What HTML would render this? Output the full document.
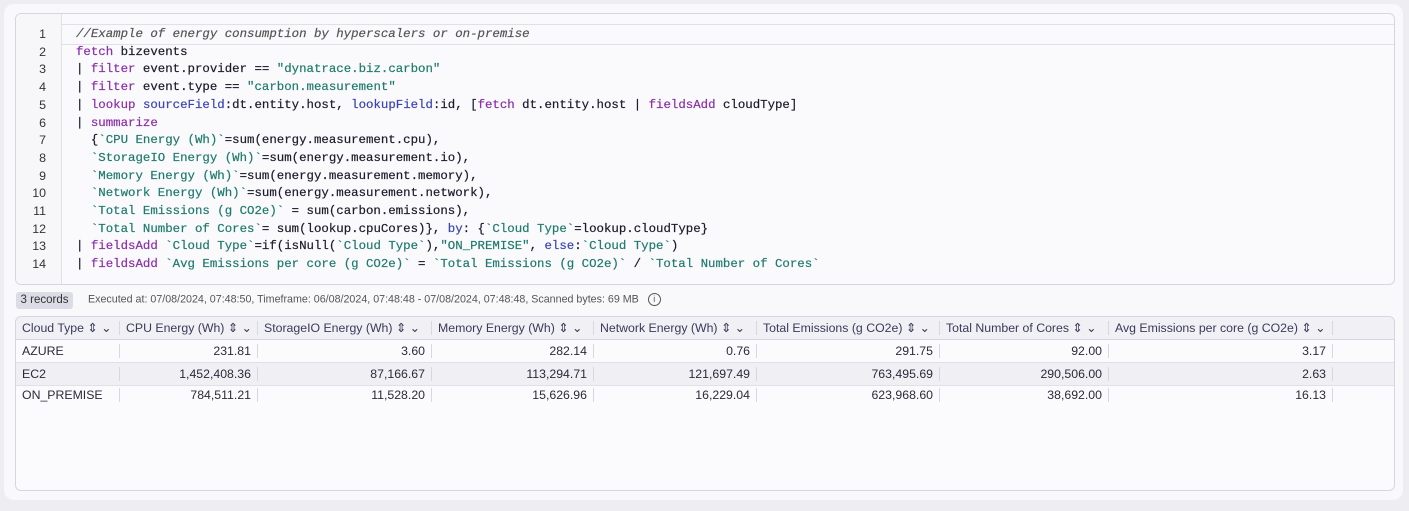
<!DOCTYPE html><html><head><style>
body{margin:0;width:1409px;height:511px;background:#eeeef2;font-family:"Liberation Sans",sans-serif;position:relative;overflow:hidden}
.card{position:absolute;left:4px;top:4px;width:1399px;height:496px;background:#f9f9fb;border-radius:10px}
.ed{position:absolute;left:15px;top:13px;width:1378px;height:270px;border:1px solid #d6d6e0;border-radius:6px;background:#fafafc;overflow:hidden}
.gut{position:absolute;left:0;top:0;width:45px;height:100%;border-right:1px solid #e0e0e8;background:#f7f7fa}
.ln{position:absolute;left:0;width:30px;text-align:right;font:12.4px "Liberation Sans",sans-serif;color:#333}
.cl{position:absolute;left:60px;font:12.4px "Liberation Mono",monospace;color:#1a1a2a;white-space:pre;-webkit-text-stroke:0.2px}
.k{color:#8a2fa8}.s{color:#1f7a6e}.c{color:#555;font-style:italic}.f{color:#3b45b0}
.hl{position:absolute;left:46px;right:0;top:10px;height:19px;border-top:1px solid #e0e0e8;border-bottom:1px solid #e0e0e8}
.badge{position:absolute;left:16px;top:292px;width:57px;height:17px;background:#dcdce6;border-radius:3px;font-size:11.5px;line-height:17px;text-align:center;color:#333}
.meta{position:absolute;left:88px;top:293px;font-size:10.7px;color:#555}
.tb{position:absolute;left:15px;top:316px;width:1378px;height:173px;border:1px solid #d6d6e0;border-radius:6px;background:#fbfbfd;overflow:hidden}
.row{position:absolute;left:0;width:100%;height:22px;font-size:12.3px;line-height:22px;color:#2a2a3a}
.hd{background:#f0f0f5;border-bottom:1px solid #d6d6e0;color:#3a3a5a}
.cell{position:absolute;top:0;height:22px;white-space:nowrap}
.cell.sep{border-right:1px solid #d8d8e2;height:14px;top:4px;line-height:14px}
</style></head><body>
<div class="card"></div>
<div class="ed">
<div class="gut"></div><div class="hl"></div>
<div class="ln" style="top:13px">1</div><div class="ln" style="top:30.7px">2</div><div class="ln" style="top:48.4px">3</div><div class="ln" style="top:66.1px">4</div><div class="ln" style="top:83.8px">5</div><div class="ln" style="top:101.5px">6</div><div class="ln" style="top:119.2px">7</div><div class="ln" style="top:136.9px">8</div><div class="ln" style="top:154.6px">9</div><div class="ln" style="top:172.3px">10</div><div class="ln" style="top:190px">11</div><div class="ln" style="top:207.7px">12</div><div class="ln" style="top:225.4px">13</div><div class="ln" style="top:243.1px">14</div>
<div class="cl c" style="top:13px">//Example of energy consumption by hyperscalers or on-premise</div>
<div class="cl" style="top:30.7px"><span class="k">fetch</span> bizevents</div>
<div class="cl" style="top:48.4px">| <span class="k">filter</span> event.provider == <span class="s">"dynatrace.biz.carbon"</span></div>
<div class="cl" style="top:66.1px">| <span class="k">filter</span> event.type == <span class="s">"carbon.measurement"</span></div>
<div class="cl" style="top:83.8px">| <span class="k">lookup</span> <span class="f">sourceField</span>:dt.entity.host, <span class="f">lookupField</span>:id, [<span class="k">fetch</span> dt.entity.host | <span class="k">fieldsAdd</span> cloudType]</div>
<div class="cl" style="top:101.5px">| <span class="k">summarize</span></div>
<div class="cl" style="top:119.2px">  {<span class="s">`CPU Energy (Wh)`</span>=sum(energy.measurement.cpu),</div>
<div class="cl" style="top:136.9px">  <span class="s">`StorageIO Energy (Wh)`</span>=sum(energy.measurement.io),</div>
<div class="cl" style="top:154.6px">  <span class="s">`Memory Energy (Wh)`</span>=sum(energy.measurement.memory),</div>
<div class="cl" style="top:172.3px">  <span class="s">`Network Energy (Wh)`</span>=sum(energy.measurement.network),</div>
<div class="cl" style="top:190px">  <span class="s">`Total Emissions (g CO2e)`</span> = sum(carbon.emissions),</div>
<div class="cl" style="top:207.7px">  <span class="s">`Total Number of Cores`</span>= sum(lookup.cpuCores)}, <span class="f">by</span>: {<span class="s">`Cloud Type`</span>=lookup.cloudType}</div>
<div class="cl" style="top:225.4px">| <span class="k">fieldsAdd</span> <span class="s">`Cloud Type`</span>=if(isNull(<span class="s">`Cloud Type`</span>),<span class="s">"ON_PREMISE"</span>, <span class="f">else</span>:<span class="s">`Cloud Type`</span>)</div>
<div class="cl" style="top:243.1px">| <span class="k">fieldsAdd</span> <span class="s">`Avg Emissions per core (g CO2e)`</span> = <span class="s">`Total Emissions (g CO2e)`</span> / <span class="s">`Total Number of Cores`</span></div>
</div>
<div class="badge">3 records</div>
<div class="meta">Executed at: 07/08/2024, 07:48:50, Timeframe: 06/08/2024, 07:48:48 - 07/08/2024, 07:48:48, Scanned bytes: 69 MB &nbsp;&nbsp;<span style="display:inline-block;width:11px;height:11px;border:1px solid #555;border-radius:50%;font-size:9px;line-height:11px;text-align:center;vertical-align:middle">i</span></div>
<div class="tb">
<div class="row hd" style="top:0">
<div class="cell sep" style="left:0;width:104px;padding-left:6px;box-sizing:border-box">Cloud Type ⇕ ⌄</div>
<div class="cell sep" style="left:104px;width:138px;padding-left:6px;box-sizing:border-box">CPU Energy (Wh) ⇕ ⌄</div>
<div class="cell sep" style="left:242px;width:174px;padding-left:6px;box-sizing:border-box">StorageIO Energy (Wh) ⇕ ⌄</div>
<div class="cell sep" style="left:416px;width:162px;padding-left:6px;box-sizing:border-box">Memory Energy (Wh) ⇕ ⌄</div>
<div class="cell sep" style="left:578px;width:163px;padding-left:6px;box-sizing:border-box">Network Energy (Wh) ⇕ ⌄</div>
<div class="cell sep" style="left:741px;width:183px;padding-left:6px;box-sizing:border-box">Total Emissions (g CO2e) ⇕ ⌄</div>
<div class="cell sep" style="left:924px;width:169px;padding-left:6px;box-sizing:border-box">Total Number of Cores ⇕ ⌄</div>
<div class="cell sep" style="left:1093px;width:224px;padding-left:6px;box-sizing:border-box">Avg Emissions per core (g CO2e) ⇕ ⌄</div>
</div>
<div id="r"></div>
</div>
<script>
const L=[0,104,242,416,578,741,924,1093,1317];
const D=[["AZURE","231.81","3.60","282.14","0.76","291.75","92.00","3.17"],["EC2","1,452,408.36","87,166.67","113,294.71","121,697.49","763,495.69","290,506.00","2.63"],["ON_PREMISE","784,511.21","11,528.20","15,626.96","16,229.04","623,968.60","38,692.00","16.13"]];
let h="";D.forEach((r,i)=>{h+=`<div class="row" style="top:${23+i*22}px;${i==1?'background:#efeff4;border-top:1px solid #e0e0e8;border-bottom:1px solid #e0e0e8;':''}">`;r.forEach((v,j)=>{h+=`<div class="cell sep" style="left:${L[j]}px;width:${L[j+1]-L[j]}px;box-sizing:border-box;${j?'text-align:right;padding-right:6px':'padding-left:6px'}">${v}</div>`});h+="</div>"});
document.getElementById("r").innerHTML=h;
</script>
</body></html>
